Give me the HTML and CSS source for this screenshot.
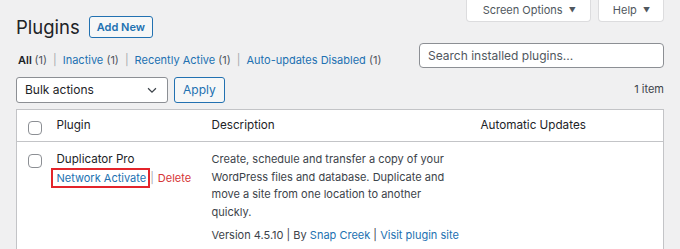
FILE: index.html
```html
<!DOCTYPE html>
<html>
<head>
  <title>Plugins</title>
  <link rel="stylesheet" href="styles.css">
</head>
<body>
  <div class="wrap">
    <div class="top-row">
      <div class="page-title">
        <h1>Plugins</h1>
        <a class="page-title-action" href="#">Add New</a>
      </div>
      <div class="screen-meta-links">
        <button class="meta-tab">Screen Options <span class="caret">&#9660;</span></button>
        <button class="meta-tab">Help <span class="caret">&#9660;</span></button>
      </div>
    </div>

    <div class="filter-row">
      <ul class="subsubsub">
        <li class="current">All <span class="count">(1)</span></li>
        <li class="sep">|</li>
        <li><a href="#">Inactive</a> <span class="count">(1)</span></li>
        <li class="sep">|</li>
        <li><a href="#">Recently Active</a> <span class="count">(1)</span></li>
        <li class="sep">|</li>
        <li><a href="#">Auto-updates Disabled</a> <span class="count">(1)</span></li>
      </ul>
      <div class="search-box">
        <input type="search" placeholder="Search installed plugins...">
      </div>
    </div>

    <div class="tablenav">
      <div class="bulk">
        <div class="select">
          <span>Bulk actions</span>
          <svg viewBox="0 0 16 16" width="14" height="14">
            <path d="M3.5 6 8 10.5 12.5 6" fill="none" stroke="#3c434a" stroke-width="1.4"/>
          </svg>
        </div>
        <button class="button">Apply</button>
      </div>
      <div class="displaying-num">1 item</div>
    </div>

    <table class="plugins">
      <thead>
        <tr>
          <th class="check-column"><span class="checkbox"></span></th>
          <th class="col-name">Plugin</th>
          <th class="col-desc">Description</th>
          <th class="col-auto">Automatic Updates</th>
        </tr>
      </thead>
      <tbody>
        <tr>
          <td class="check-column"><span class="checkbox"></span></td>
          <td class="col-name">
            <div class="plugin-title">Duplicator Pro</div>
            <div class="row-actions">
              <a class="highlight" href="#">Network Activate</a><span class="sep">|</span><a class="delete" href="#">Delete</a>
            </div>
          </td>
          <td class="col-desc">
            <p>Create, schedule and transfer a copy of your WordPress files and database. Duplicate and move a site from one location to another quickly.</p>
            <div class="meta">Version 4.5.10 | By <a href="#">Snap Creek</a> | <a href="#">Visit plugin site</a></div>
          </td>
          <td class="col-auto"></td>
        </tr>
      </tbody>
    </table>
  </div>
</body>
</html>
```

FILE: styles.css
```css
:root {
  --blue: #2271b1;
  --text: #1d2327;
  --text-soft: #3c434a;
  --border: #c3c4c7;
  --border-light: #dcdcde;
  --bg: #f0f0f1;
  --red: #d63638;
}

* {
  margin: 0;
  padding: 0;
  box-sizing: border-box;
}

body {
  background: var(--bg);
  font-family: Inter, 'Liberation Sans', Arial, sans-serif;
  font-size: 11px;
  line-height: 17.4px;
  color: var(--text-soft);
  overflow: hidden;
}

a {
  color: var(--blue);
  text-decoration: none;
}

.wrap {
  padding: 0 16px;
}

/* header */
.top-row {
  display: flex;
  justify-content: space-between;
  align-items: flex-start;
}

.page-title {
  display: flex;
  align-items: center;
  gap: 9px;
  padding-top: 16px;
}

h1 {
  font-size: 18.5px;
  font-weight: 400;
  line-height: 22px;
  color: var(--text);
}

.page-title-action {
  display: inline-block;
  height: 22px;
  line-height: 20px;
  padding: 0 7px;
  border: 1px solid var(--blue);
  border-radius: 3px;
  background: #f6f7f7;
  font-weight: 600;
  font-size: 11px;
}

.screen-meta-links {
  display: flex;
  gap: 7px;
}

.meta-tab {
  height: 22px;
  padding: 0 14px 0 16px;
  background: #fff;
  border: 1px solid var(--border-light);
  border-top: none;
  border-radius: 0 0 4px 4px;
  font: inherit;
  color: #50575e;
}

.meta-tab:last-child {
  padding: 0 13px 0 14px;
}

.meta-tab .caret {
  font-size: 7px;
  margin-left: 3px;
  vertical-align: 1px;
}

/* filters + search */
.filter-row {
  display: flex;
  justify-content: space-between;
  align-items: flex-end;
  margin-top: 5px;
}

.subsubsub {
  display: flex;
  list-style: none;
  gap: 6px;
  padding-left: 2px;
  margin-bottom: -1px;
}

.subsubsub .current {
  color: var(--text);
  font-weight: 600;
}

.subsubsub .count {
  font-weight: 400;
  color: #50575e;
}

.subsubsub .sep {
  color: #a7aaad;
}

.search-box input {
  width: 245px;
  height: 25px;
  border: 1px solid #8c8f94;
  border-radius: 4px;
  padding: 0 8px;
  font: inherit;
  font-size: 12px;
  color: var(--text);
  background: #fff;
}

.search-box input::placeholder {
  color: #50575e;
}

/* bulk actions */
.tablenav {
  display: flex;
  justify-content: space-between;
  align-items: center;
  margin-top: 9px;
}

.bulk {
  display: flex;
  gap: 6px;
}

.select {
  width: 152px;
  height: 26px;
  display: flex;
  align-items: center;
  justify-content: space-between;
  padding: 0 8px;
  background: #fff;
  border: 1px solid #8c8f94;
  border-radius: 3px;
  font-size: 12px;
  color: var(--text);
}

.button {
  height: 26px;
  padding: 0 8px;
  border: 1px solid var(--blue);
  border-radius: 3px;
  background: #f6f7f7;
  color: var(--blue);
  font: inherit;
  font-size: 12px;
}

.displaying-num {
  color: var(--text-soft);
}

/* table */
.plugins {
  width: 100%;
  margin-top: 6px;
  border: 1px solid var(--border);
  border-collapse: collapse;
  background: #fff;
  table-layout: fixed;
}

.plugins th {
  text-align: left;
  font-weight: 400;
  color: var(--text);
  padding: 7px 8px;
  border-bottom: 1px solid var(--border);
  font-size: 11.7px;
}

.plugins td {
  vertical-align: top;
  padding: 9px 8px 10px;
  color: var(--text-soft);
}

.plugins .check-column {
  width: 32px;
  padding-left: 11px;
  padding-right: 0;
}

.plugins th.check-column {
  padding-top: 10px;
  padding-bottom: 6px;
}

.plugins td.check-column {
  padding-top: 12px;
}

.col-name {
  width: 155px;
}

.col-desc {
  width: 269px;
}

.plugins td.col-desc {
  padding-right: 20px;
}

.checkbox {
  display: block;
  width: 14px;
  height: 14px;
  border: 1px solid #8c8f94;
  border-radius: 4px;
  background: #fff;
}

.plugin-title {
  color: var(--text);
  font-size: 11.6px;
}

.row-actions {
  margin-top: 1px;
  white-space: nowrap;
}

.row-actions .sep {
  color: #a7aaad;
  margin: 0 4px 0 4px;
}

.row-actions .delete {
  color: var(--red);
}

.highlight {
  position: relative;
}

.highlight::after {
  content: '';
  position: absolute;
  left: -6px;
  right: -4px;
  top: -3px;
  bottom: -3px;
  border: 2px solid #e3242b;
}

.col-desc p {
  margin-bottom: 6px;
}

.meta {
  white-space: nowrap;
}
```
